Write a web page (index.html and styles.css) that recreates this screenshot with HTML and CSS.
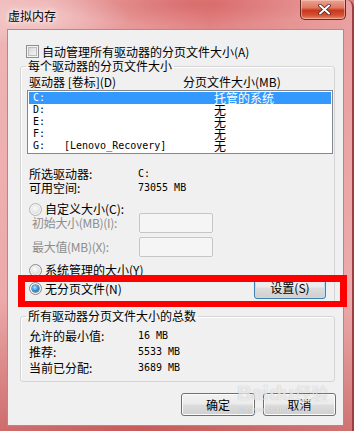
FILE: index.html
```html
<!DOCTYPE html>
<html lang="zh-CN">
<head>
<meta charset="utf-8">
<title>虚拟内存</title>
<link rel="stylesheet" href="styles.css">
</head>
<body>
<div class="window">
  <div class="titlebar">
    <span class="title">虚拟内存</span>
    <div class="close">
      <svg width="13" height="11" viewBox="0 0 13 11">
        <path d="M2 1.5 L11 9.5 M11 1.5 L2 9.5" stroke="#4a2020" stroke-width="3.6" stroke-linecap="round"/>
        <path d="M2 1.5 L11 9.5 M11 1.5 L2 9.5" stroke="#ffffff" stroke-width="2" stroke-linecap="round"/>
      </svg>
    </div>
  </div>
  <div class="client">
    <div class="check-row"><span class="checkbox"></span><span>自动管理所有驱动器的分页文件大小(A)</span></div>

    <fieldset class="group g1">
      <legend>每个驱动器的分页文件大小</legend>
      <div class="cols"><span class="c1">驱动器 [卷标](D)</span><span class="c2">分页文件大小(MB)</span></div>
      <div class="listbox">
        <div class="lrow sel"><span class="drv mono">C:</span><span class="vol mono"></span><span class="size">托管的系统</span></div>
        <div class="lrow"><span class="drv mono">D:</span><span class="vol mono"></span><span class="size">无</span></div>
        <div class="lrow"><span class="drv mono">E:</span><span class="vol mono"></span><span class="size">无</span></div>
        <div class="lrow"><span class="drv mono">F:</span><span class="vol mono"></span><span class="size">无</span></div>
        <div class="lrow"><span class="drv mono">G:</span><span class="vol mono">[Lenovo_Recovery]</span><span class="size">无</span></div>
      </div>
      <div class="info first"><span class="lbl">所选驱动器:</span><span class="mono">C:</span></div>
      <div class="info"><span class="lbl">可用空间:</span><span class="mono">73055 MB</span></div>
      <div class="radio-row custom"><span class="radio dim"></span><span>自定义大小(C):</span></div>
      <div class="field-row f1"><span class="flbl">初始大小(MB)(I):</span><span class="edit"></span></div>
      <div class="field-row f2"><span class="flbl">最大值(MB)(X):</span><span class="edit"></span></div>
      <div class="radio-row sys"><span class="radio"></span><span>系统管理的大小(Y)</span></div>
      <div class="radio-row last">
        <div class="rl"><span class="radio on"></span><span>无分页文件(N)</span></div>
        <button class="btn default set">设置(S)</button>
      </div>
    </fieldset>

    <fieldset class="group g2">
      <legend>所有驱动器分页文件大小的总数</legend>
      <div class="info t"><span class="lbl">允许的最小值:</span><span class="mono">16 MB</span></div>
      <div class="info t"><span class="lbl">推荐:</span><span class="mono">5533 MB</span></div>
      <div class="info t"><span class="lbl">当前已分配:</span><span class="mono">3689 MB</span></div>
    </fieldset>

    <div class="buttons">
      <button class="btn ok">确定</button>
      <button class="btn cancel">取消</button>
    </div>
  </div>

  <div class="redbox"></div>
  <div class="watermark">
    <div class="wm-main">Bai<span class="du">du</span><span class="jy">经验</span></div>
    <div class="wm-url">jingyan.baidu.com</div>
  </div>
</div>
</body>
</html>
```

FILE: styles.css
```css
* { box-sizing: border-box; }

html, body {
  margin: 0;
  padding: 0;
  width: 354px;
  height: 431px;
  overflow: hidden;
  background: #d98080;
}

body {
  font-family: "Noto Sans CJK SC", sans-serif;
  font-size: 12px;
  line-height: 12px;
  color: #000;
}

.window {
  position: relative;
  width: 354px;
  height: 431px;
  display: flex;
  flex-direction: column;
  border-right: 2px solid #9c3f3f;
  border-radius: 0 7px 0 0;
  background:
    radial-gradient(ellipse 90px 30px at 40px 18px, rgba(255,255,255,0.35), rgba(255,255,255,0)),
    radial-gradient(ellipse 140px 22px at 190px 4px, rgba(200,60,60,0.35), rgba(200,60,60,0)),
    linear-gradient(180deg, rgba(255,255,255,0) 0px, rgba(255,255,255,0) 300px, rgba(170,40,40,0.45) 431px),
    linear-gradient(100deg, #efb6b6 0%, #e89a9a 30%, #e18383 50%, #e79797 72%, #eeb0b0 100%);
}

.titlebar {
  height: 29px;
  display: flex;
  align-items: flex-start;
  padding: 0 6px 0 8px;
}

.title {
  margin-top: 10px;
  line-height: 12px;
  text-shadow: 0 0 4px #fff, 0 0 6px rgba(255,255,255,0.9);
}

.close {
  margin-left: auto;
  width: 46px;
  height: 20px;
  border: 1px solid #6a2a22;
  border-top: none;
  border-radius: 0 0 5px 5px;
  background: linear-gradient(180deg, #eba392 0%, #de7a62 40%, #c8371e 55%, #d65034 80%, #e88a68 100%);
  box-shadow: inset 0 0 0 1px rgba(255,210,200,0.5);
  display: flex;
  align-items: center;
  justify-content: center;
  padding-left: 2px;
}

.client {
  margin: 0 8px 0 7px;
  height: 397px;
  background: #f0f0f0;
  border: 1px solid #a98c8c;
  display: flex;
  flex-direction: column;
}

.mono {
  font-family: "DejaVu Sans Mono", "Liberation Mono", monospace;
  font-size: 10px;
}

/* checkbox */
.check-row {
  margin-top: 15px;
  padding-left: 18px;
  height: 13px;
  display: flex;
  align-items: center;
  gap: 3px;
}
.checkbox {
  width: 13px;
  height: 13px;
  border: 1px solid #8e8f8f;
  background: linear-gradient(135deg, #cfcfcf 0%, #e6e6e6 50%, #fbfbfb 100%);
  box-shadow: inset 0 0 0 1px #f4f4f4, inset 0 0 0 2px #bcbcbc;
}

/* group boxes */
.group {
  border: 1px solid #d5d5d5;
  border-radius: 3px;
  box-shadow: inset 1px 1px 0 #ffffff;
  padding: 0 1px 3px 6px;
  margin: 2px 8px 0 12px;
  min-width: 0;
}
.group legend {
  padding: 0 2px;
  margin-left: -1px;
  line-height: 12px;
  height: 12px;
}

.cols {
  margin: 3px 0 0 2px;
  height: 14px;
  display: flex;
  align-items: center;
}
.cols .c1 { width: 154px; }

.listbox {
  margin-top: 1px;
  height: 64px;
  background: #fff;
  border: 1px solid #828790;
  padding: 1px 1px;
}
.lrow {
  height: 12px;
  display: flex;
  align-items: center;
  padding-left: 4px;
}
.lrow.sel {
  background: #3399ff;
  color: #fff;
}
.drv { width: 31px; }
.vol { width: 150px; }
.size { font-size: 12px; line-height: 12px; }

.info {
  height: 14px;
  display: flex;
  align-items: center;
  margin-left: 2px;
}
.info.first { margin-top: 13px; }
.info .lbl { width: 109px; }

.radio-row {
  display: flex;
  align-items: center;
  gap: 3px;
  margin-left: 2px;
  height: 14px;
}
.radio-row.custom { margin-top: 7px; }
.radio-row.sys { margin-top: 6px; }
.radio-row.last {
  margin-top: -1px;
  height: 23px;
  justify-content: space-between;
}
.rl {
  display: flex;
  align-items: center;
  gap: 3px;
  padding-top: 2px;
}

.radio {
  width: 13px;
  height: 13px;
  border-radius: 50%;
  border: 1px solid #8a8a8a;
  background: radial-gradient(circle at 45% 40%, #fdfdfd 0%, #e4e4e4 45%, #c9c9c9 100%);
  box-shadow: inset 0 0 0 1px #f6f6f6;
  position: relative;
  flex: none;
}
.radio.dim {
  border-color: #b4b4b4;
  background: radial-gradient(circle at 45% 40%, #fbfbfb 0%, #e2e2e2 55%, #d4d4d4 100%);
}
.radio.on::after {
  content: "";
  position: absolute;
  left: 2px;
  top: 2px;
  width: 7px;
  height: 7px;
  border-radius: 50%;
  background: radial-gradient(circle at 40% 35%, #bfe6ff 0%, #3a9ae0 45%, #0d5aa8 100%);
  box-shadow: 0 0 0 0.5px #1c4d7c;
}

.field-row {
  display: flex;
  align-items: center;
  height: 20px;
  margin-left: 5px;
}
.field-row.f1 { margin-top: -3px; }
.field-row.f2 { margin-top: 4px; }
.flbl {
  width: 107px;
  color: #8d8d8d;
  letter-spacing: -0.3px;
}
.edit {
  width: 74px;
  height: 20px;
  border: 1px solid #c6c6c6;
  border-radius: 2px;
  background: #f5f5f5;
}

/* buttons */
.btn {
  font-family: "Noto Sans CJK SC", sans-serif;
  font-size: 12px;
  line-height: 12px;
  color: #000;
  height: 23px;
  padding: 0;
  border: 1px solid #707070;
  border-radius: 3px;
  background: linear-gradient(180deg, #f2f2f2 0%, #ebebeb 48%, #dddddd 52%, #cfcfcf 100%);
  box-shadow: inset 0 0 0 1px #fcfcfc;
}
.btn.default {
  border-color: #3c7fb1;
  box-shadow: inset 0 0 0 1px #b7e1f9;
}
.set {
  width: 72px;
  margin-right: 7px;
}

.g2 { margin-top: 7px; padding-bottom: 5px; }
.info.t { height: 16px; }
.info.t:first-of-type { margin-top: 6px; }

.buttons {
  margin-top: 11px;
  display: flex;
  justify-content: flex-end;
  gap: 8px;
  padding-right: 7px;
}
.ok { width: 74px; }
.cancel { width: 73px; }

/* annotation overlay */
.redbox {
  position: absolute;
  left: 18px;
  top: 275px;
  width: 329px;
  height: 32px;
  border: 7px solid #ff0000;
  border-bottom-width: 6px;
}

.watermark {
  position: absolute;
  left: 237px;
  top: 380px;
  color: rgba(255,255,255,0.7);
  text-shadow: 0 0 1px rgba(0,0,0,0.25);
  font-family: "Liberation Sans", sans-serif;
  pointer-events: none;
}
.wm-main {
  font-size: 21px;
  line-height: 26px;
  font-weight: bold;
  letter-spacing: -0.5px;
}
.wm-main .du { margin-left: 1px; }
.wm-main .jy {
  font-family: "Noto Sans CJK SC", sans-serif;
  font-size: 17px;
  font-weight: normal;
  margin-left: 1px;
}
.wm-url {
  font-size: 8px;
  line-height: 8px;
  margin-left: 3px;
  letter-spacing: 0.3px;
}
```
